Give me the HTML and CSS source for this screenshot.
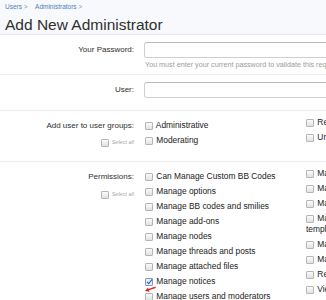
FILE: index.html
```html
<!DOCTYPE html>
<html lang="en">
<head>
  <meta charset="UTF-8" />
  <title>Add New Administrator</title>
  <link rel="stylesheet" href="styles.css">
</head>
<body>

  <div class="title-bar">
    <div class="breadcrumb">
      <span class="crumb"><a href="#">Users</a> &gt;</span>
      <span class="crumb"><a href="#">Administrators</a> &gt;</span>
    </div>
    <h1>Add New Administrator</h1>
  </div>

  <form class="admin-form">
    <dl class="ctrl-unit first-unit">
      <dt><label for="password">Your Password:</label></dt>
      <dd>
        <input type="password" id="password" class="text-ctrl" />
        <p class="explain">You must enter your current password to validate this request.</p>
      </dd>
    </dl>

    <dl class="ctrl-unit user-unit">
      <dt><label for="username">User:</label></dt>
      <dd><input type="text" id="username" class="text-ctrl" /></dd>
    </dl>

    <dl class="ctrl-unit list-unit">
      <dt>
        <span class="list-label">Add user to user groups:</span>
        <label class="select-all"><input type="checkbox" /> Select all</label>
      </dt>
      <dd class="check-columns">
        <ul class="check-list first">
          <li><label><input type="checkbox" /> Administrative</label></li>
          <li><label><input type="checkbox" /> Moderating</label></li>
        </ul>
        <ul class="check-list">
          <li><label><input type="checkbox" /> Registered</label></li>
          <li><label><input type="checkbox" /> Unregistered / Unconfirmed</label></li>
        </ul>
      </dd>
    </dl>

    <dl class="ctrl-unit list-unit">
      <dt>
        <span class="list-label">Permissions:</span>
        <label class="select-all perm"><input type="checkbox" /> Select all</label>
      </dt>
      <dd class="check-columns">
        <ul class="check-list first">
          <li><label><input type="checkbox" /> Can Manage Custom BB Codes</label></li>
          <li><label><input type="checkbox" /> Manage options</label></li>
          <li><label><input type="checkbox" /> Manage BB codes and smilies</label></li>
          <li><label><input type="checkbox" /> Manage add-ons</label></li>
          <li><label><input type="checkbox" /> Manage nodes</label></li>
          <li><label><input type="checkbox" /> Manage threads and posts</label></li>
          <li><label><input type="checkbox" /> Manage attached files</label></li>
          <li class="marked">
            <label><input type="checkbox" checked /> Manage notices</label>
            <svg class="pointer" width="11" height="6" viewBox="0 0 11 6">
              <path d="M0 5 L3 1.6 L3.4 3 L10.5 0.4 L10.8 2 L4 4.2 L4.4 5.8 Z" fill="#e3242b"/>
            </svg>
          </li>
          <li><label><input type="checkbox" /> Manage users and moderators</label></li>
          <li><label><input type="checkbox" /> Manage user groups</label></li>
          <li><label><input type="checkbox" /> Manage trophies</label></li>
        </ul>
        <ul class="check-list">
          <li><label><input type="checkbox" /> Manage languages and phrases</label></li>
          <li><label><input type="checkbox" /> Manage user titles</label></li>
          <li><label><input type="checkbox" /> Manage cron entries</label></li>
          <li><label><input type="checkbox" /> Manage styles, style properties and templates</label></li>
          <li><label><input type="checkbox" /> Manage BB code media sites</label></li>
          <li><label><input type="checkbox" /> Manage user promotions</label></li>
          <li><label><input type="checkbox" /> Rebuild caches</label></li>
          <li><label><input type="checkbox" /> View logs</label></li>
        </ul>
      </dd>
    </dl>
  </form>

</body>
</html>
```

FILE: styles.css
```css
html, body {
  overflow: hidden;
}

body {
  margin: 0;
  background: #fff;
  color: #333;
  font-family: "Liberation Sans", Arial, sans-serif;
}

.title-bar {
  background: #f8f9fc;
  border-bottom: 1px solid #e3e8ef;
  padding: 2px 5px 0;
  height: 32px;
}

.breadcrumb {
  font-size: 6.5px;
  line-height: 10px;
  color: #7d93b2;
}

.breadcrumb a {
  color: #4f7fc0;
  text-decoration: none;
}

.breadcrumb .crumb {
  margin-right: 6px;
}

.title-bar h1 {
  margin: 4px 0 0;
  font-size: 15.5px;
  line-height: 18px;
  font-weight: normal;
  color: #2f2f2f;
}

.admin-form {
  width: 700px;
}

.ctrl-unit {
  display: grid;
  grid-template-columns: 134px 1fr;
  column-gap: 10px;
  margin: 0;
  border-bottom: 1px solid #ececec;
}

.ctrl-unit dt {
  text-align: right;
  font-size: 8px;
  line-height: 16px;
  color: #2e2e2e;
}

.ctrl-unit dd {
  margin: 0;
}

.first-unit {
  padding: 7px 0 5px;
}

.user-unit {
  padding: 7px 0 12px;
}

.list-unit {
  padding: 6px 0 11px;
}

.text-ctrl {
  display: block;
  box-sizing: border-box;
  width: 420px;
  height: 16px;
  margin: 0;
  padding: 0 3px;
  border: 1px solid #cfcfcf;
  border-top-color: #b8b8b8;
  border-radius: 3px;
  background: #fff;
  font: inherit;
}

.explain {
  margin: 2px 0 0 1px;
  font-size: 7.2px;
  line-height: 9px;
  color: #9b9b9b;
}

.list-label {
  display: block;
  padding-top: 3px;
  line-height: 11px;
}

.select-all {
  display: block;
  margin-top: 6px;
  font-size: 5.5px;
  font-style: italic;
  line-height: 11px;
  color: #a8a8a8;
}

.select-all.perm {
  margin-top: 7px;
}

.check-columns {
  display: flex;
  margin-left: 1px !important;
}

.check-list {
  list-style: none;
  margin: 0;
  padding: 0;
  width: 161px;
  font-size: 8.4px;
  line-height: 11px;
  color: #222;
}

.check-list.first {
  padding-top: 3px;
}

.check-list li {
  margin-bottom: 4px;
}

.check-list li.marked {
  position: relative;
}

input[type="checkbox"] {
  -webkit-appearance: none;
  appearance: none;
  position: relative;
  box-sizing: border-box;
  width: 8px;
  height: 8px;
  margin: 0 1px 0 0;
  border: 1px solid #b5b5b5;
  border-radius: 1px;
  background: linear-gradient(#fbfbfb, #e1e1e1);
  vertical-align: middle;
}

input[type="checkbox"]:checked {
  border-color: #7e9bc7;
  background: #e6eefa;
}

input[type="checkbox"]:checked::after {
  content: "";
  position: absolute;
  left: 2px;
  top: -1px;
  width: 2px;
  height: 5px;
  border: solid #2c5cb0;
  border-width: 0 1.3px 1.3px 0;
  transform: rotate(40deg);
}

.pointer {
  position: absolute;
  left: 0;
  top: 10px;
}
```
